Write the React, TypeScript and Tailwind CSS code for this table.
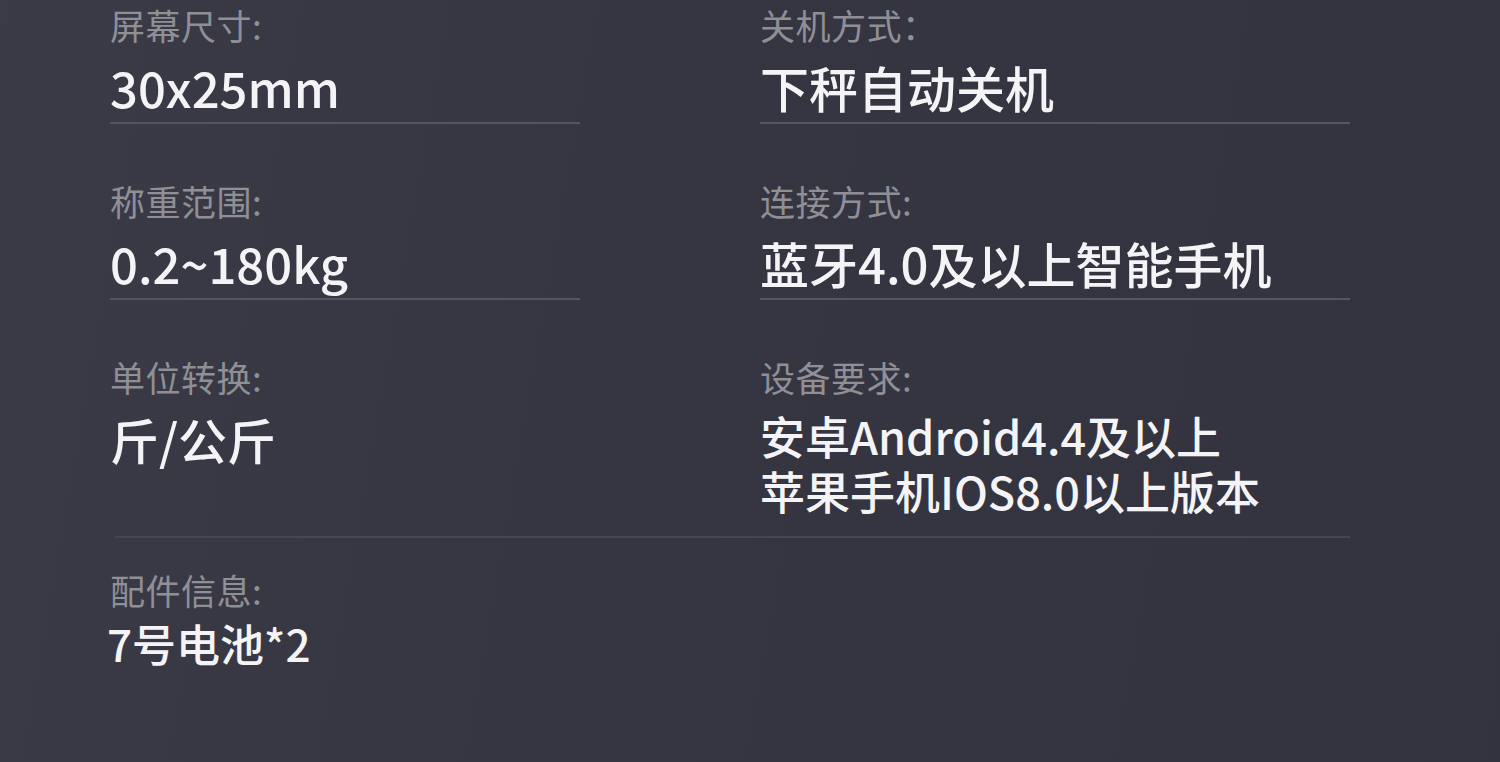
import React from "react";

type Spec = {
  label: string;
  value: string[];
};

const font = { fontFamily: '"Noto Sans CJK SC", "Noto Sans", sans-serif' };

const Cell: React.FC<Spec & { line?: boolean }> = ({ label, value, line = true }) => {
  return (
    <div className={line ? "border-b-2 border-[#55555f] pb-[4px]" : ""}>
      <p className="text-[35px] leading-[50px] tracking-[0.5px] text-[#8f8f96]">{label}</p>
      <div className="mt-[6px]">
        {value.map((v) => (
          <p
            key={v}
            className={
              value.length > 1
                ? "text-[45px] leading-[55px] font-medium text-[#f4f4f6]"
                : "text-[49px] leading-[62px] font-medium text-[#f4f4f6]"
            }
          >
            {v}
          </p>
        ))}
      </div>
    </div>
  );
};

export default function App() {
  return (
    <div
      style={font}
      className="w-[1500px] h-[762px] overflow-hidden bg-[linear-gradient(100deg,#3b3b47_0%,#363642_40%,#33333f_100%)] pl-[110px]"
    >
      <div className="grid grid-cols-[470px_590px] gap-x-[180px] gap-y-[52px]">
        <Cell label="屏幕尺寸:" value={["30x25mm"]} />
        <Cell label="关机方式：" value={["下秤自动关机"]} />
        <Cell label="称重范围:" value={["0.2~180kg"]} />
        <Cell label="连接方式:" value={["蓝牙4.0及以上智能手机"]} />
      </div>
      <div className="ml-[5px] w-[1235px] border-b-2 border-[#474752] mt-[52px] pb-[18px]">
        <div className="-ml-[5px] grid grid-cols-[470px_590px] gap-x-[180px]">
          <Cell label="单位转换:" value={["斤/公斤"]} line={false} />
          <Cell
            label="设备要求:"
            value={["安卓Android4.4及以上", "苹果手机IOS8.0以上版本"]}
            line={false}
          />
        </div>
      </div>
      <div className="mt-[27px]">
        <p className="text-[35px] leading-[50px] tracking-[0.5px] text-[#8f8f96]">配件信息:</p>
        <p className="text-[44px] leading-[56px] font-medium text-[#f4f4f6] -ml-[3px]">7号电池*2</p>
      </div>
    </div>
  );
}
